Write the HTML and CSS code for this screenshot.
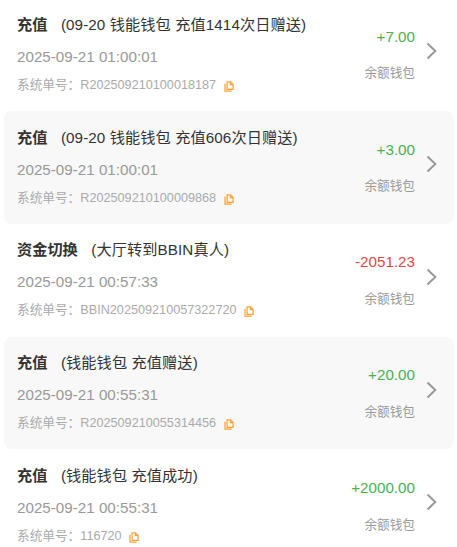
FILE: index.html
```
<!DOCTYPE html>
<html lang="zh-CN">
<head>
  <meta charset="UTF-8" />
  <meta name="viewport" content="width=device-width, initial-scale=1" />
  <title>资金明细</title>
  <link rel="stylesheet" href="styles.css">
</head>
<body>
  <svg class="symbols" aria-hidden="true">
    <symbol id="copy" viewBox="0 0 10 11">
      <path d="M3.1.9h3.5l2.5 2.6v4.8h-6z" />
      <path d="M6.4.9v2.8h2.7" />
      <path d="M1 2.8v7.3h6.6" />
    </symbol>
    <symbol id="arrow" viewBox="0 0 12 18">
      <path d="M1.5 1.5 9.3 9l-7.8 7.5" />
    </symbol>
  </svg>
  <main class="list">
    <div class="item">
      <div class="info">
        <div class="title"><b>充值</b><span>(09-20 钱能钱包 充值1414次日赠送)</span></div>
        <div class="time">2025-09-21 01:00:01</div>
        <div class="order">系统单号：<span>R202509210100018187</span><svg class="copy"><use href="#copy" /></svg></div>
      </div>
      <div class="amount">
        <div class="money">+7.00</div>
        <div class="wallet">余额钱包</div>
      </div>
      <svg class="arrow"><use href="#arrow" /></svg>
    </div>
    <div class="item">
      <div class="info">
        <div class="title"><b>充值</b><span>(09-20 钱能钱包 充值606次日赠送)</span></div>
        <div class="time">2025-09-21 01:00:01</div>
        <div class="order">系统单号：<span>R202509210100009868</span><svg class="copy"><use href="#copy" /></svg></div>
      </div>
      <div class="amount">
        <div class="money">+3.00</div>
        <div class="wallet">余额钱包</div>
      </div>
      <svg class="arrow"><use href="#arrow" /></svg>
    </div>
    <div class="item">
      <div class="info">
        <div class="title"><b>资金切换</b><span>(大厅转到BBIN真人)</span></div>
        <div class="time">2025-09-21 00:57:33</div>
        <div class="order">系统单号：<span>BBIN202509210057322720</span><svg class="copy"><use href="#copy" /></svg></div>
      </div>
      <div class="amount">
        <div class="money out">-2051.23</div>
        <div class="wallet">余额钱包</div>
      </div>
      <svg class="arrow"><use href="#arrow" /></svg>
    </div>
    <div class="item">
      <div class="info">
        <div class="title"><b>充值</b><span>(钱能钱包 充值赠送)</span></div>
        <div class="time">2025-09-21 00:55:31</div>
        <div class="order">系统单号：<span>R202509210055314456</span><svg class="copy"><use href="#copy" /></svg></div>
      </div>
      <div class="amount">
        <div class="money">+20.00</div>
        <div class="wallet">余额钱包</div>
      </div>
      <svg class="arrow"><use href="#arrow" /></svg>
    </div>
    <div class="item">
      <div class="info">
        <div class="title"><b>充值</b><span>(钱能钱包 充值成功)</span></div>
        <div class="time">2025-09-21 00:55:31</div>
        <div class="order">系统单号：<span>116720</span><svg class="copy"><use href="#copy" /></svg></div>
      </div>
      <div class="amount">
        <div class="money">+2000.00</div>
        <div class="wallet">余额钱包</div>
      </div>
      <svg class="arrow"><use href="#arrow" /></svg>
    </div>
  </main>
</body>
</html>
```
FILE: styles.css
```
* {
  box-sizing: border-box;
}
html {
  overflow: hidden;
}
body {
  margin: 0;
  height: 547px;
  overflow: hidden;
  background: #fff;
  color: #333;
  font-family: "Liberation Sans", "Noto Sans CJK SC", sans-serif;
  font-size: 15.2px;
}
.symbols {
  display: none;
}
.list {
  margin: -1.8px 3px 0 4px;
}
.item {
  display: flex;
  height: 112.8px;
  padding: 11.6px 16px 0 13px;
  border-radius: 8px;
}
.item:nth-child(even) {
  background: #f8f8f8;
}
.info {
  flex: 1;
  white-space: nowrap;
}
.title {
  height: 29px;
  line-height: 29px;
}
.title b {
  margin-right: 13.5px;
}
.title span {
  letter-spacing: 0.1px;
}
.time {
  height: 36px;
  line-height: 36.4px;
  color: #999;
}
.order {
  display: flex;
  align-items: center;
  height: 21px;
  color: #aaa;
  font-size: 12.67px;
  line-height: 21px;
}
.copy {
  width: 10px;
  height: 11px;
  margin: 2px 0 0 7.5px;
  fill: none;
  stroke: #ffa033;
  stroke-width: 1.2;
}
.amount {
  text-align: right;
}
.money {
  height: 36px;
  padding-top: 12px;
  color: #4caf50;
  line-height: 30px;
}
.money.out {
  color: #e04848;
}
.wallet {
  margin-top: 16.6px;
  color: #999;
  font-size: 12.67px;
  line-height: 22px;
}
.arrow {
  width: 12px;
  height: 18px;
  margin: 32.4px 0 0 11px;
  fill: none;
  stroke: #999;
  stroke-width: 2;
}
```
